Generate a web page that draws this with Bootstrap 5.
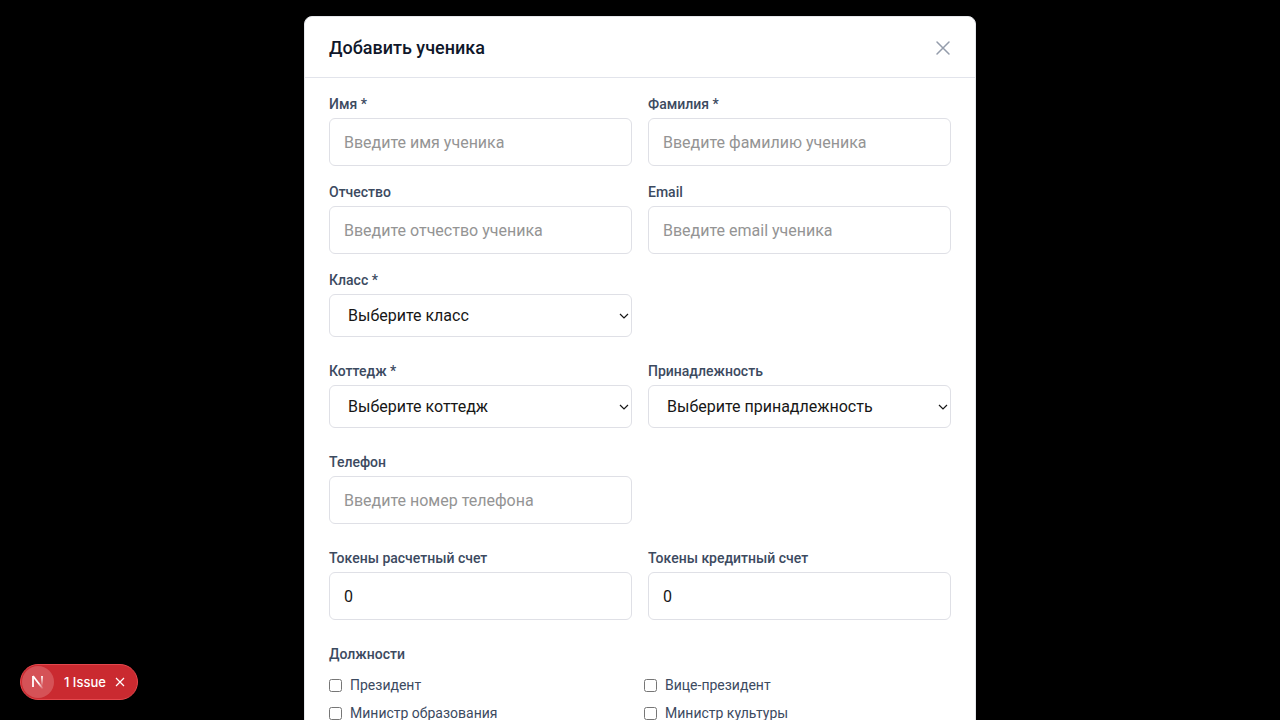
<!DOCTYPE html>
<html lang="ru">
<head>
<meta charset="utf-8">
<meta name="viewport" content="width=device-width, initial-scale=1">
<title>Добавить ученика</title>
<link href="https://cdn.jsdelivr.net/npm/bootstrap@5.3.0/dist/css/bootstrap.min.css" rel="stylesheet">
<script src="https://cdn.jsdelivr.net/npm/bootstrap@5.3.0/dist/js/bootstrap.bundle.min.js" defer></script>
<style>
body { background: #000; font-family: Roboto, "Liberation Sans", sans-serif; color: #171717; }
.dialog-card { max-width: 672px; border: 1px solid #e5e7eb; border-radius: 8px; }
.dialog-head { padding: 17px 24px 15px; border-bottom: 1px solid #e2e4eb; }
.dialog-title { font-size: 18px; line-height: 28px; font-weight: 500; color: #0f172a; }
.dialog-body { padding: 16px 24px 24px; }
.close-btn { width: 16px; height: 28px; color: #949cab; }
.field-label { font-size: 14px; line-height: 20px; font-weight: 500; color: #3c4a5f; margin-bottom: 4px; display: block; }
.form-control.field, .form-select.field { font-size: 16px; line-height: 24px; border: 1px solid #dfe0e6; border-radius: 6px; color: #171717; }
.form-control.field { height: 48px; padding: 8px 14px; }
.form-control.field::placeholder { color: #949494; }
.form-select.field { height: 43px; padding: 8px 20px 8px 18px; background-position: right 1px center; background-size: 12px 12px;
  background-image: url("data:image/svg+xml,%3Csvg xmlns='http://www.w3.org/2000/svg' viewBox='0 0 12 12'%3E%3Cpath fill='none' stroke='%23171717' stroke-width='1.2' d='M2 4l4 4 4-4'/%3E%3C/svg%3E"); }
.roles-title { margin-bottom: 11px; }
.role { font-size: 14px; line-height: 20px; color: #3c4a5f; }
.role input { width: 13px; height: 13px; margin: 0; }
.issue-pill { left: 20px; bottom: 20px; height: 36px; padding: 1px 11px 1px 1px; background: #ca2a30; border: 1px solid #e5484d; }
.issue-text { font: 500 13px/20px Inter, sans-serif; margin: 0 8px 0 10px; }
.next-mark { width: 32px; height: 32px; background: #d55257; }
</style>
</head>
<body class="vh-100 overflow-hidden">
<main class="dialog-card bg-white mx-auto mt-3" role="dialog" aria-labelledby="dialog-title">
  <header class="dialog-head d-flex align-items-center justify-content-between">
    <h1 class="dialog-title m-0" id="dialog-title">Добавить ученика</h1>
    <button type="button" class="close-btn btn p-0 border-0 d-flex align-items-center" aria-label="Закрыть">
      <svg width="16" height="16" viewBox="0 0 16 16" fill="none" stroke="currentColor" stroke-width="1.5" stroke-linecap="round"><path d="M2 2l12 12M14 2L2 14"/></svg>
    </button>
  </header>
  <form class="dialog-body d-flex flex-column gap-4">
    <div class="row gx-3 gy-3 mt-0">
      <div class="col-6 mt-0"><label class="field-label" for="first">Имя *</label><input class="form-control field" id="first" placeholder="Введите имя ученика"></div>
      <div class="col-6 mt-0"><label class="field-label" for="last">Фамилия *</label><input class="form-control field" id="last" placeholder="Введите фамилию ученика"></div>
      <div class="col-6"><label class="field-label" for="middle">Отчество</label><input class="form-control field" id="middle" placeholder="Введите отчество ученика"></div>
      <div class="col-6"><label class="field-label" for="email">Email</label><input type="email" class="form-control field" id="email" placeholder="Введите email ученика"></div>
      <div class="col-6"><label class="field-label" for="grade">Класс *</label><select class="form-select field" id="grade"><option>Выберите класс</option></select></div>
    </div>
    <div class="row gx-3">
      <div class="col-6"><label class="field-label" for="house">Коттедж *</label><select class="form-select field" id="house"><option>Выберите коттедж</option></select></div>
      <div class="col-6"><label class="field-label" for="group">Принадлежность</label><select class="form-select field" id="group"><option>Выберите принадлежность</option></select></div>
    </div>
    <div class="row gx-3">
      <div class="col-6"><label class="field-label" for="phone">Телефон</label><input type="tel" class="form-control field" id="phone" placeholder="Введите номер телефона"></div>
    </div>
    <div class="row gx-3">
      <div class="col-6"><label class="field-label" for="debit">Токены расчетный счет</label><input class="form-control field" id="debit" inputmode="numeric" value="0"></div>
      <div class="col-6"><label class="field-label" for="credit">Токены кредитный счет</label><input class="form-control field" id="credit" inputmode="numeric" value="0"></div>
    </div>
    <fieldset>
      <legend class="field-label roles-title">Должности</legend>
      <div class="row gx-2 gy-2 mt-0">
        <div class="col-6 mt-0"><label class="role d-flex align-items-center gap-2"><input type="checkbox">Президент</label></div>
        <div class="col-6 mt-0"><label class="role d-flex align-items-center gap-2"><input type="checkbox">Вице-президент</label></div>
        <div class="col-6"><label class="role d-flex align-items-center gap-2"><input type="checkbox">Министр образования</label></div>
        <div class="col-6"><label class="role d-flex align-items-center gap-2"><input type="checkbox">Министр культуры</label></div>
      </div>
    </fieldset>
  </form>
</main>
<div class="issue-pill position-fixed rounded-pill d-flex align-items-center">
  <span class="next-mark rounded-circle d-flex align-items-center justify-content-center">
    <svg width="16" height="16" viewBox="0 0 16 16" fill="none" stroke-width="1.8"><defs><linearGradient id="fade" gradientUnits="userSpaceOnUse" x1="9" y1="9" x2="13" y2="15"><stop stop-color="#fff"/><stop offset="1" stop-color="#fff" stop-opacity="0"/></linearGradient><linearGradient id="fadeDown" gradientUnits="userSpaceOnUse" x1="12" y1="2" x2="12" y2="12"><stop stop-color="#fff"/><stop offset="1" stop-color="#fff" stop-opacity="0"/></linearGradient></defs><path stroke="#fff" d="M3 13V2"/><path stroke="url(#fade)" d="M3 2l10 13"/><path stroke="url(#fadeDown)" d="M12 2v10"/></svg>
  </span>
  <button type="button" class="btn p-0 border-0 text-white issue-text">1 Issue</button>
  <button type="button" class="btn p-0 border-0 text-white d-flex" aria-label="Скрыть"><svg width="12" height="12" viewBox="0 0 12 12" stroke="currentColor" stroke-width="1.2"><path d="M2 2l8 8M10 2l-8 8"/></svg></button>
</div>
</body>
</html>
